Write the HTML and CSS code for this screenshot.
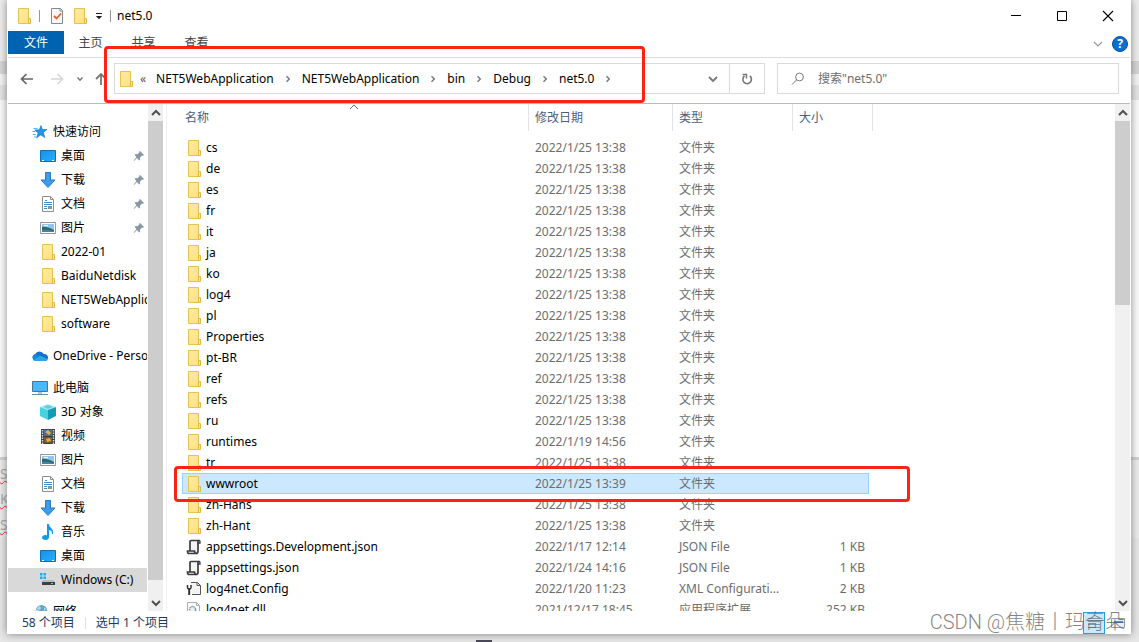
FILE: index.html
```html
<!DOCTYPE html>
<html lang="zh-CN">
<head>
<meta charset="utf-8">
<title>net5.0</title>
<link rel="stylesheet" href="styles.css">
</head>
<body>
<svg class="defs" aria-hidden="true">
  <defs>
    <linearGradient id="fg" x1="0" y1="0" x2="1" y2="1"><stop offset="0" stop-color="#ffeba6"/><stop offset="1" stop-color="#ffe07c"/></linearGradient>
    <linearGradient id="bg" x1="0" y1="0" x2="1" y2="1"><stop offset="0" stop-color="#1b8fe8"/><stop offset="1" stop-color="#22b0ff"/></linearGradient>
    <symbol id="folder" viewBox="0 0 16 16"><path d="M2.500.5h10v10h1v5h-11z" fill="url(#fg)" stroke="#e8c251"/><path d="M12.500 10.500h2v5h-2z" fill="#ffe9a0" stroke="#e3b93f"/></symbol>
    <symbol id="star" viewBox="0 0 16 16"><path d="M9 1.500l1.300 4 4.700-.1-3.600 3 1.400 5.100-4-2.600-4.300 2.900 1.600-4.800-3.300-3 4.500-.3z" fill="#2196e8" stroke="#1473c0" stroke-width=".6"/><path d="M1.500 4.500h4M.5 7.500h3M.8 10.500h3M2 13h2" stroke="#51b4f2"/></symbol>
    <symbol id="desktop" viewBox="0 0 16 16"><path d="M.5 2.500h15v11H.5z" fill="url(#bg)" stroke="#0c6fb8"/><path d="M2 12.500h2m8 0h2" stroke="#fff"/></symbol>
    <symbol id="down" viewBox="0 0 16 16"><path d="M5.500.5h5v7.500h4.500L8 15.500 1 8h4.500z" fill="#3e9be9" stroke="#2a79c4"/></symbol>
    <symbol id="doc" viewBox="0 0 16 16"><path d="M2.500.5h8l3 3v12h-11z" fill="#fff" stroke="#8b8f92"/><path d="M10.500.5v3h3" fill="none" stroke="#8b8f92"/><path d="M5 4.500h2M4 6.500h8M4 8.500h8M4 10.500h3M4 12.500h3" stroke="#3b8cc9"/><path d="M8 10h4v3H8z" fill="#7a9d92"/></symbol>
    <symbol id="pic" viewBox="0 0 16 16"><path d="M.5 2.500h15v11H.5z" fill="#fff" stroke="#969a9c"/><path d="M2 4h12v8H2z" fill="#8dc8f2"/><path d="M2 7q4-1 12 3v2H2z" fill="#37655d"/><path d="M2 10q5-1 12 1v1H2z" fill="#3e82b7"/><path d="M4 5.500h4" stroke="#fff"/></symbol>
    <symbol id="pin" viewBox="0 0 12 12"><path d="M7 1l4 4-1 .8-1-.2-2 2 .2 2-1 .8-2.300-2.300L1 11l-.3-.4L3.500 7 1.600 5l.9-.9 2 .2 2-2L6.200 1.500z" fill="#8696a3"/></symbol>
    <symbol id="cloud" viewBox="0 0 16 16"><path d="M3.500 13A3.500 3.500 0 0 1 3 6.200 5 5 0 0 1 11.800 6 3.600 3.600 0 0 1 16 9.500 3.500 3.500 0 0 1 12.500 13z" fill="#1470c8"/><path d="M3 6.200l5 1.500-5 4.800A3.300 3.300 0 0 1 3 6.200" fill="#1285dc"/><path d="M1.300 12l7-4.300L15.500 11q-1 2-3 2h-9q-1.500 0-2.200-1" fill="#28a8ea"/></symbol>
    <symbol id="pc" viewBox="0 0 16 16"><path d="M.5 1.500h15v10H.5z" fill="#49b7fc" stroke="#4a7592"/><path d="M6 12h4v2H6z" fill="#b5c4ce"/><path d="M0 14.500h16" stroke="#6e8fa5"/></symbol>
    <symbol id="cube" viewBox="0 0 16 16"><path d="M0 3l8-3 8 3-8 3z" fill="#a4edf3"/><path d="M0 3l8 3v10l-8-4z" fill="#48d2de"/><path d="M16 3L8 6v10l8-4z" fill="#129cb6"/><path d="M3 3l5-2 5 2-5 2z" fill="#62cfdd"/></symbol>
    <symbol id="video" viewBox="0 0 16 16"><path d="M1 1h14v15H1z" fill="#3b3b3b"/><path d="M2.500 2v14M13.500 2v14" stroke="#ddd" stroke-width="1.500" stroke-dasharray="1.500 1"/><path d="M4 1.500h8V8H4z" fill="#3774b7"/><path d="M4 9h8v6H4z" fill="#745b34"/><path d="M5 4l3-2 3 3-2 2zm1 7l4-1 1 3-4 1z" fill="#e4b433"/><path d="M5 6h2v2H5z" fill="#c93d37"/></symbol>
    <symbol id="music" viewBox="0 0 16 16"><path d="M7 0h2c0 4 5 4 4 10h-1c0-3-1-3.500-3-4v7c0 4-7 3.500-7 .5 0-2 3-3 5-2z" fill="#1499e8"/></symbol>
    <symbol id="drive" viewBox="0 0 16 16"><path d="M0 1h2.500v2.500H0zm3.500 0H6v2.500H3.500zM0 4.500h2.500V7H0zm3.500 0H6V7H3.500z" fill="#1ab0ec"/><path d="M3 8h10l2 2H1z" fill="#b9bdbf"/><path d="M2 10h13v3H2z" fill="#3c4144"/><path d="M11 11.500h2" stroke="#61e46a"/></symbol>
    <symbol id="net" viewBox="0 0 16 16"><circle cx="9.500" cy="6.500" r="5.500" fill="#5da7d1"/><path d="M7 2q3 1 1 4l-3-1zm5 1l2 2-2 2z" fill="#b8d9e7"/><path d="M0 8l6-2 2 5-7 2z" fill="#318bc4" stroke="#dbe7ed"/></symbol>
    <symbol id="json" viewBox="0 0 16 16"><path d="M4 12V2.500Q4 1.500 5 1.500h8.500q-1.500 0-1.500 2V12q0 2.500-2 2.500" fill="#f5f5f5" stroke="#3d3d40" stroke-width="1.700"/><path d="M1.500 12h7q0 2.500 2 2.500H3Q1.500 14.500 1.500 12z" fill="#eee" stroke="#3d3d40" stroke-width="1.700"/><path d="M12 4V2.500q0-1 1-1t1 1V4z" fill="#f5f5f5" stroke="#3d3d40" stroke-width="1.300"/></symbol>
    <symbol id="config" viewBox="0 0 16 16"><path d="M5 1.500h6.500l3 3v9H6" fill="#f3f3f3" stroke="#555"/><path d="M11 1.500v3h3.500" fill="none" stroke="#555"/><path d="M1.500 4v2.500q0 1.500 1.700 1.500T5 6.500V4" stroke="#333" stroke-width="1.500" fill="none"/><path d="M3.200 7.500V14" stroke="#333" stroke-width="2"/></symbol>
    <symbol id="dll" viewBox="0 0 16 16"><path d="M1.500.5h9l3 3v12h-12z" fill="#fff" stroke="#a9acae"/><path d="M10.500.5v3h3" fill="none" stroke="#a9acae"/><circle cx="6.500" cy="7.500" r="3" fill="#eef2f5" stroke="#8499a9" stroke-dasharray="1.500 .6" stroke-width="1.500"/><circle cx="10" cy="11" r="2" fill="#dce4e9" stroke="#8499a9"/></symbol>
    <symbol id="right" viewBox="0 0 8 8"><path d="M2.500 1.200L5.300 4 2.500 6.800" fill="none" stroke="#777" stroke-width="1.400"/></symbol>
    <symbol id="sup" viewBox="0 0 10 8"><path d="M1 6l4-4 4 4" fill="none" stroke="#505050" stroke-width="2"/></symbol>
    <symbol id="sdown" viewBox="0 0 10 8"><path d="M1 2l4 4 4-4" fill="none" stroke="#505050" stroke-width="2"/></symbol>
  </defs>
</svg>

<div class="backdrop" aria-hidden="true"><span class="scrap s1">S</span><span class="scrap s2">Kr</span><span class="scrap s3">S</span><span class="task"></span></div>

<div class="window">
  <header class="title">
    <svg class="i16"><use href="#folder"/></svg>
    <span class="bar"></span>
    <button class="plain" aria-label="属性"><svg class="i16" viewBox="0 0 16 16"><path d="M2.500.5h9l2 2v13h-11z" fill="#f8f8f8" stroke="#85898c"/><path d="M11 .5v2.500h2.500" fill="none" stroke="#85898c"/><path d="M5 8l2.500 2.500L12 5.500" fill="none" stroke="#ed5a24" stroke-width="1.800"/></svg></button>
    <button class="plain" aria-label="新建文件夹"><svg class="i16"><use href="#folder"/></svg></button>
    <button class="plain" aria-label="自定义"><svg class="quick" viewBox="0 0 8 8"><path d="M1 1.500h6" stroke="#222"/><path d="M.8 4h6.400L4 7.200z" fill="#222"/></svg></button>
    <span class="bar"></span>
    <span class="caption">net5.0</span>
    <div class="controls">
      <button class="plain" aria-label="最小化"><svg viewBox="0 0 12 12"><path d="M1 5.500h10" stroke="#000"/></svg></button>
      <button class="plain" aria-label="最大化"><svg viewBox="0 0 12 12"><path d="M1.500 1.500h9v9h-9z" fill="none" stroke="#000"/></svg></button>
      <button class="plain" aria-label="关闭"><svg viewBox="0 0 12 12"><path d="M1 1l10 10M11 1L1 11" stroke="#000" stroke-width="1.100"/></svg></button>
    </div>
  </header>

  <div class="ribbon">
    <button class="tab file">文件</button><button class="tab">主页</button><button class="tab">共享</button><button class="tab">查看</button>
    <div class="help">
      <button class="plain" aria-label="展开功能区"><svg class="i10" viewBox="0 0 10 10"><path d="M1 3l4 4 4-4" fill="none" stroke="#999" stroke-width="1.200"/></svg></button>
      <button class="question" aria-label="帮助">?</button>
    </div>
  </div>

  <div class="address">
    <div class="history">
      <button class="plain" aria-label="后退"><svg class="i14" viewBox="0 0 14 14"><path d="M13 7H2M6.500 2L1.500 7l5 5" fill="none" stroke="#666" stroke-width="1.700"/></svg></button>
      <button class="plain" aria-label="前进"><svg class="i14" viewBox="0 0 14 14"><path d="M1 7h11M7.500 2l5 5-5 5" fill="none" stroke="#d5d5d5" stroke-width="1.500"/></svg></button>
      <button class="plain" aria-label="最近"><svg class="i8" viewBox="0 0 8 8"><path d="M1.500 2.500L4 5.200l2.500-2.700" fill="none" stroke="#777" stroke-width="1.500"/></svg></button>
      <button class="plain" aria-label="向上"><svg class="i14" viewBox="0 0 14 14"><path d="M7 13V2M2 7l5-5 5 5" fill="none" stroke="#777" stroke-width="1.800"/></svg></button>
    </div>
    <nav class="path" aria-label="地址">
      <svg class="i16"><use href="#folder"/></svg>
      <span class="more">«</span>
      <a href="#">NET5WebApplication</a><svg class="i8"><use href="#right"/></svg>
      <a href="#">NET5WebApplication</a><svg class="i8"><use href="#right"/></svg>
      <a href="#">bin</a><svg class="i8"><use href="#right"/></svg>
      <a href="#">Debug</a><svg class="i8"><use href="#right"/></svg>
      <a href="#">net5.0</a><svg class="i8"><use href="#right"/></svg>
      <button class="plain drop" aria-label="历史记录"><svg class="i10" viewBox="0 0 10 10"><path d="M1 3l4 4 4-4" fill="none" stroke="#777" stroke-width="1.800"/></svg></button>
      <button class="refresh" aria-label="刷新"><svg class="i12" viewBox="0 0 12 12"><path d="M3.500 3A4.300 4.300 0 1 0 8.800 3" fill="none" stroke="#777" stroke-width="1.600"/><path d="M1.500 1.500h4v4" fill="none" stroke="#777" stroke-width="1.400"/></svg></button>
    </nav>
    <label class="search">
      <svg class="i14" viewBox="0 0 14 14"><circle cx="8.500" cy="5" r="3.900" fill="none" stroke="#777"/><path d="M5.500 8L1 12.500" stroke="#777"/></svg>
      <input type="text" placeholder="搜索&quot;net5.0&quot;" aria-label="搜索">
    </label>
  </div>

  <main class="main">
    <nav class="tree" aria-label="导航">
      <a href="#" class="root"><svg class="i16"><use href="#star"/></svg>快速访问</a>
      <a href="#"><svg class="i16"><use href="#desktop"/></svg>桌面<svg class="pin"><use href="#pin"/></svg></a>
      <a href="#"><svg class="i16"><use href="#down"/></svg>下载<svg class="pin"><use href="#pin"/></svg></a>
      <a href="#"><svg class="i16"><use href="#doc"/></svg>文档<svg class="pin"><use href="#pin"/></svg></a>
      <a href="#"><svg class="i16"><use href="#pic"/></svg>图片<svg class="pin"><use href="#pin"/></svg></a>
      <a href="#"><svg class="i16"><use href="#folder"/></svg>2022-01</a>
      <a href="#"><svg class="i16"><use href="#folder"/></svg>BaiduNetdisk</a>
      <a href="#"><svg class="i16"><use href="#folder"/></svg>NET5WebApplication</a>
      <a href="#"><svg class="i16"><use href="#folder"/></svg>software</a>
      <a href="#" class="root"><svg class="i16"><use href="#cloud"/></svg>OneDrive - Personal</a>
      <a href="#" class="root"><svg class="i16"><use href="#pc"/></svg>此电脑</a>
      <a href="#"><svg class="i16"><use href="#cube"/></svg>3D 对象</a>
      <a href="#"><svg class="i16"><use href="#video"/></svg>视频</a>
      <a href="#"><svg class="i16"><use href="#pic"/></svg>图片</a>
      <a href="#"><svg class="i16"><use href="#doc"/></svg>文档</a>
      <a href="#"><svg class="i16"><use href="#down"/></svg>下载</a>
      <a href="#"><svg class="i16"><use href="#music"/></svg>音乐</a>
      <a href="#"><svg class="i16"><use href="#desktop"/></svg>桌面</a>
      <a href="#" class="current"><svg class="i16"><use href="#drive"/></svg>Windows (C:)</a>
      <a href="#" class="root"><svg class="i16"><use href="#net"/></svg>网络</a>
    </nav>
    <div class="scroll"><svg class="arrow"><use href="#sup"/></svg><div class="track"><div class="thumb long"></div></div><svg class="arrow"><use href="#sdown"/></svg></div>

    <section class="files">
      <svg class="sort" viewBox="0 0 10 6"><path d="M1 5l4-4 4 4" fill="none" stroke="#666"/></svg>
      <table>
        <colgroup><col class="c-name"><col class="c-date"><col class="c-type"><col class="c-size"><col class="c-end"></colgroup>
        <thead><tr><th>名称</th><th>修改日期</th><th>类型</th><th colspan="2">大小</th></tr></thead>
        <tbody>
          <tr><td><svg class="i16"><use href="#folder"/></svg>cs</td><td>2022/1/25 13:38</td><td>文件夹</td><td></td></tr>
          <tr><td><svg class="i16"><use href="#folder"/></svg>de</td><td>2022/1/25 13:38</td><td>文件夹</td><td></td></tr>
          <tr><td><svg class="i16"><use href="#folder"/></svg>es</td><td>2022/1/25 13:38</td><td>文件夹</td><td></td></tr>
          <tr><td><svg class="i16"><use href="#folder"/></svg>fr</td><td>2022/1/25 13:38</td><td>文件夹</td><td></td></tr>
          <tr><td><svg class="i16"><use href="#folder"/></svg>it</td><td>2022/1/25 13:38</td><td>文件夹</td><td></td></tr>
          <tr><td><svg class="i16"><use href="#folder"/></svg>ja</td><td>2022/1/25 13:38</td><td>文件夹</td><td></td></tr>
          <tr><td><svg class="i16"><use href="#folder"/></svg>ko</td><td>2022/1/25 13:38</td><td>文件夹</td><td></td></tr>
          <tr><td><svg class="i16"><use href="#folder"/></svg>log4</td><td>2022/1/25 13:38</td><td>文件夹</td><td></td></tr>
          <tr><td><svg class="i16"><use href="#folder"/></svg>pl</td><td>2022/1/25 13:38</td><td>文件夹</td><td></td></tr>
          <tr><td><svg class="i16"><use href="#folder"/></svg>Properties</td><td>2022/1/25 13:38</td><td>文件夹</td><td></td></tr>
          <tr><td><svg class="i16"><use href="#folder"/></svg>pt-BR</td><td>2022/1/25 13:38</td><td>文件夹</td><td></td></tr>
          <tr><td><svg class="i16"><use href="#folder"/></svg>ref</td><td>2022/1/25 13:38</td><td>文件夹</td><td></td></tr>
          <tr><td><svg class="i16"><use href="#folder"/></svg>refs</td><td>2022/1/25 13:38</td><td>文件夹</td><td></td></tr>
          <tr><td><svg class="i16"><use href="#folder"/></svg>ru</td><td>2022/1/25 13:38</td><td>文件夹</td><td></td></tr>
          <tr><td><svg class="i16"><use href="#folder"/></svg>runtimes</td><td>2022/1/19 14:56</td><td>文件夹</td><td></td></tr>
          <tr><td><svg class="i16"><use href="#folder"/></svg>tr</td><td>2022/1/25 13:38</td><td>文件夹</td><td></td></tr>
          <tr class="selected"><td><svg class="i16"><use href="#folder"/></svg>wwwroot</td><td>2022/1/25 13:39</td><td>文件夹</td><td></td></tr>
          <tr><td><svg class="i16"><use href="#folder"/></svg>zh-Hans</td><td>2022/1/25 13:38</td><td>文件夹</td><td></td></tr>
          <tr><td><svg class="i16"><use href="#folder"/></svg>zh-Hant</td><td>2022/1/25 13:38</td><td>文件夹</td><td></td></tr>
          <tr><td><svg class="i16"><use href="#json"/></svg>appsettings.Development.json</td><td>2022/1/17 12:14</td><td>JSON File</td><td>1 KB</td></tr>
          <tr><td><svg class="i16"><use href="#json"/></svg>appsettings.json</td><td>2022/1/24 14:16</td><td>JSON File</td><td>1 KB</td></tr>
          <tr><td><svg class="i16"><use href="#config"/></svg>log4net.Config</td><td>2022/1/20 11:23</td><td>XML Configurati...</td><td>2 KB</td></tr>
          <tr><td><svg class="i16"><use href="#dll"/></svg>log4net.dll</td><td>2021/12/17 18:45</td><td>应用程序扩展</td><td>252 KB</td></tr>
        </tbody>
      </table>
      <div class="mark mark-row"></div>
    </section>
    <div class="scroll"><svg class="arrow"><use href="#sup"/></svg><div class="track"><div class="thumb short"></div></div><svg class="arrow"><use href="#sdown"/></svg></div>
  </main>

  <footer class="status">
    <span>58 个项目</span><span class="sep"></span><span>选中 1 个项目</span>
    <div class="views">
      <button class="view on" aria-label="详细信息"><svg class="i14" viewBox="0 0 14 14"><path d="M1 2.500h12M1 5.500h12M1 8.500h12M1 11.500h12" stroke="#7a99ad"/></svg></button>
      <button class="view" aria-label="大图标"><svg class="i14" viewBox="0 0 14 14"><path d="M.5 2.500h13v9H.5z" fill="#e5f0fc" stroke="#9a9a9a"/><path d="M3 5h9v2H3z" fill="#4d8df5"/></svg></button>
    </div>
    <span class="watermark">CSDN @焦糖丨玛奇朵</span>
  </footer>
  <div class="mark mark-path"></div>
</div>
</body>
</html>
```
FILE: styles.css
```css
* { box-sizing: border-box; }
body {
  margin: 0;
  height: 100vh;
  padding: 0 8px 8px 7px;
  overflow: hidden;
  font: 12px/16px "Noto Sans", "Noto Sans CJK SC", sans-serif;
  color: #000;
  background: #e0e0e0;
}
a { color: inherit; text-decoration: none; }
svg { display: block; flex: none; }
button { font: inherit; color: inherit; cursor: default; }
.defs { position: absolute; width: 0; height: 0; }
.i16 { width: 16px; height: 16px; }
.i14 { width: 14px; height: 14px; }
.i12 { width: 12px; height: 12px; }
.i10 { width: 10px; height: 10px; }
.i8 { width: 8px; height: 8px; }
.plain { display: flex; padding: 0; border: 0; background: none; }

/* Desktop seen behind the window */
.backdrop {
  position: absolute;
  inset: 0;
  overflow: hidden;
  background: linear-gradient(#ededed 61px, #d6d6d6 61px 74px, #f3f3f3 74px 85px, #e4e4e4 85px 100px, #fafafa 100px 457px, #d2d2d2 457px 460px, #ebebeb 460px 538px, #e6e6e6 538px);
}
.scrap {
  position: absolute;
  left: 0;
  color: #aaa;
  font-size: 14px;
  text-decoration: underline wavy #e33 1px;
}
.s1 { top: 466px; }
.s2 { top: 491px; }
.s3 { top: 517px; }
.task { position: absolute; left: 476px; bottom: 0; width: 16px; height: 2px; background: #4c4a58; }

.window {
  position: relative;
  display: flex;
  flex-direction: column;
  height: 100%;
  padding: 0 1px;
  background: #fff;
  box-shadow: 0 0 8px rgba(0, 0, 0, .45);
}

.title { display: flex; align-items: center; height: 31px; padding-left: 8px; gap: 7px; }
.bar { width: 1px; height: 12px; margin-right: 2px; background: #999; }
.quick { width: 8px; height: 8px; }
.caption { margin-left: -3px; }
.controls { display: flex; gap: 34px; margin-left: auto; padding-right: 16px; }
.controls svg { width: 12px; height: 12px; }

.ribbon { display: flex; height: 27px; padding-bottom: 3px; border-bottom: 1px solid #dcdcdc; }
.tab { width: 53px; padding: 0; border: 0; background: none; color: #444; }
.tab.file { width: 56px; background: #0063b1; color: #fff; }
.help { display: flex; align-items: center; gap: 9px; margin-left: auto; padding: 3px 2px 0 0; }
.question {
  width: 16px;
  height: 16px;
  padding: 0;
  border: 1px solid #00509d;
  border-radius: 50%;
  background: #0b6fd0;
  color: #fff;
  font-weight: 700;
  line-height: 14px;
}

.address { display: flex; height: 46px; padding: 5px 11px 9px 12px; border-bottom: 1px solid #bbb; }
.history { display: flex; align-items: center; width: 94px; gap: 12px; }
.history .plain:nth-child(2) { margin-left: 4px; }
.history .plain:last-child { margin-left: -2px; }
.path { display: flex; flex: 646; align-items: center; border: 1px solid #d9d9d9; padding-left: 3px; }
.path a { margin: 0 10px; }
.more { margin-left: 6px; color: #555; }
.drop { margin-left: auto; padding-right: 11px; }
.refresh {
  display: grid;
  place-items: center;
  width: 35px;
  height: 100%;
  padding: 0;
  border: 0;
  border-left: 1px solid #d9d9d9;
  background: none;
}
.search { display: flex; flex: 327; align-items: center; gap: 13px; margin-left: 12px; padding-left: 13px; border: 1px solid #d9d9d9; }
.search input { flex: 1; min-width: 0; padding: 0; border: 0; outline: 0; background: none; font: inherit; }
.search input::placeholder { color: #6d6d6d; opacity: 1; }

.main { display: flex; flex: 1; min-height: 0; overflow: hidden; }
.tree { width: 139px; flex: none; padding-top: 16px; overflow: hidden; }
.tree a { display: flex; align-items: center; gap: 5px; height: 24px; padding-left: 32px; white-space: nowrap; }
.tree .root { padding-left: 24px; }
.tree .root:not(:first-child) { margin-top: 8px; }
.tree .current { background: #d9d9d9; }
.pin { width: 12px; height: 12px; margin: 0 2px 0 auto; }

.scroll { display: flex; flex-direction: column; flex: none; width: 15px; margin-left: 1px; background: #f0f0f0; }
.arrow { width: 10px; height: 8px; margin: 5px auto 4px; }
.track { flex: 1; }
.thumb { background: #cdcdcd; }
.long { height: 97%; }
.short { height: 39%; }

.files { position: relative; flex: 1; min-width: 0; margin-left: 3px; padding-left: 15px; border-left: 1px solid #f0f0f0; overflow: hidden; }
.sort { position: absolute; left: 182px; top: 0; width: 10px; height: 6px; }
table { table-layout: fixed; width: 691px; border-collapse: separate; border-spacing: 0; }
.c-name { width: 347px; }
.c-date { width: 144px; }
.c-type { width: 120px; }
.c-size { width: 76px; }
.c-end { width: 4px; }
th { height: 27px; padding: 0 6px; border-right: 1px solid #e3e3e3; color: #4c607a; font-weight: 400; text-align: left; }
th:first-child { padding-left: 3px; }
tbody::before { content: ""; display: block; height: 6px; }
td { height: 21px; padding: 0 6px; color: #6d6d6d; white-space: nowrap; }
td:first-child { display: flex; align-items: center; gap: 4px; padding-left: 4px; color: #000; }
td:nth-child(4) { padding: 0 4px 0 0; text-align: right; }
.selected td { background: #cce8ff; border: solid #99d1ff; border-width: 1px 0; }
.selected td:first-child { border-left-width: 1px; padding-left: 3px; }
.selected td:last-child { border-right-width: 1px; }

.status { display: flex; position: relative; align-items: center; flex: none; height: 23px; padding-left: 14px; color: #1e395b; }
.sep { width: 1px; height: 12px; margin: 0 10px; background: #e0e0e0; }
.views { display: flex; gap: 2px; margin-left: auto; padding-right: 1px; }
.view { display: grid; place-items: center; width: 22px; height: 22px; padding: 0; border: 1px solid transparent; background: none; }
.view.on { border-color: #26a0da; background: #cce8f7; }
.watermark {
  position: absolute;
  right: 5px;
  top: 0;
  color: rgba(90, 90, 90, .75);
  font: 300 20px/23px Roboto, "Noto Sans CJK SC", sans-serif;
  white-space: nowrap;
}

/* Red annotation frames */
.mark { position: absolute; border: 3px solid #fc2314; border-radius: 4px; pointer-events: none; }
.mark-path { left: 97px; top: 46px; width: 541px; height: 57px; }
.mark-row { left: 7px; top: 362px; width: 736px; height: 36px; }
```
